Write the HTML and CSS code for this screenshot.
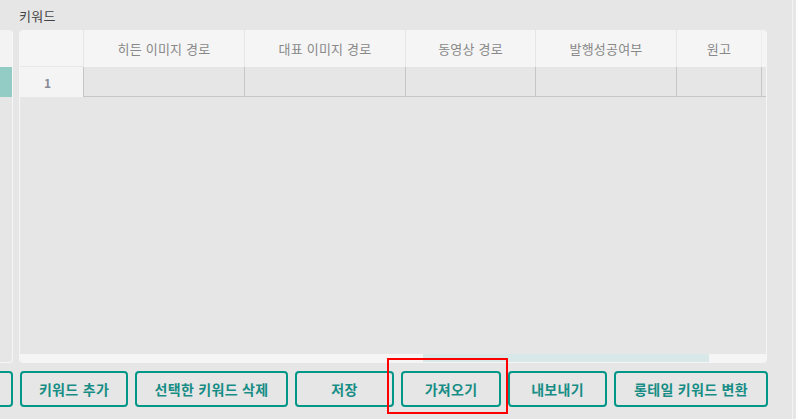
FILE: index.html
```html
<!DOCTYPE html>
<html lang="ko">
<head>
<meta charset="utf-8">
<link rel="stylesheet" href="styles.css">
</head>
<body>
<div class="page">
  <div class="content">
    <div class="title">키워드</div>
    <div class="main">
      <div class="side">
        <div class="side-head"></div>
        <div class="side-row"></div>
      </div>
      <div class="grid">
        <div class="grid-head">
          <div class="c c-num"></div>
          <div class="c c1">히든 이미지 경로</div>
          <div class="c c2">대표 이미지 경로</div>
          <div class="c c3">동영상 경로</div>
          <div class="c c4">발행성공여부</div>
          <div class="c c5">원고</div>
          <div class="c c6"></div>
        </div>
        <div class="grid-row">
          <div class="c c-num num">1</div>
          <div class="c c1"></div>
          <div class="c c2"></div>
          <div class="c c3"></div>
          <div class="c c4"></div>
          <div class="c c5"></div>
          <div class="c c6"></div>
        </div>
        <div class="grid-body"></div>
        <div class="hscroll"><div class="thumb"></div></div>
      </div>
    </div>
    <div class="buttons">
      <button class="btn b0" aria-label="이전"></button>
      <button class="btn b1">키워드 추가</button>
      <button class="btn b2">선택한 키워드 삭제</button>
      <button class="btn b3">저장</button>
      <button class="btn b4">가져오기</button>
      <button class="btn b5">내보내기</button>
      <button class="btn b6">롱테일 키워드 변환</button>
    </div>
  </div>
  <div class="vline"></div>
</div>
<div class="highlight"></div>
</body>
</html>
```
FILE: styles.css
```css
* { box-sizing: border-box; }
html, body {
  margin: 0;
  padding: 0;
  width: 796px;
  height: 419px;
  overflow: hidden;
  background: #e6e6e6;
  font-family: "Noto Sans CJK KR", "Noto Sans", sans-serif;
}
.page {
  display: flex;
  height: 419px;
}
.content {
  width: 792px;
  display: flex;
  flex-direction: column;
}
.vline {
  width: 1px;
  background: #f3f3f3;
  height: 419px;
}
.title {
  height: 30px;
  padding: 1px 0 0 19px;
  display: flex;
  align-items: center;
  font-size: 13px;
  color: #444;
  letter-spacing: 0.3px;
}
.main {
  display: flex;
  gap: 6px;
  height: 333px;
}
.side {
  width: 13px;
  display: flex;
  flex-direction: column;
  border-right: 1px solid #f6f6f6;
  border-bottom: 1px solid #f6f6f6;
  border-radius: 0 4px 4px 0;
  overflow: hidden;
}
.side-head {
  height: 37px;
  background: #f3f3f3;
}
.side-row {
  height: 30px;
  background: #93cbc5;
}
.grid {
  width: 748px;
  display: flex;
  flex-direction: column;
  border: 1px solid #f5f5f5;
  border-top: none;
  border-radius: 4px;
  overflow: hidden;
}
.grid-head, .grid-row {
  display: flex;
}
.grid-head {
  height: 37px;
  background: #f5f5f5;
  color: #888;
  font-size: 13px;
  letter-spacing: 0.2px;
}
.grid-head .c {
  display: flex;
  align-items: center;
  justify-content: center;
  border-left: 1px solid #e6e6e6;
  padding-bottom: 1px;
}
.grid-head .c-num { border-left: none; border-bottom: 1px solid #e8e8e8; }
.grid-row {
  height: 30px;
}
.grid-row .c {
  border-left: 1px solid #c6c6c6;
  border-bottom: 1px solid #c6c6c6;
}
.grid-row .c-num {
  border-left: none;
  border-bottom: none;
  background: #f4f4f4;
}
.num {
  display: flex;
  align-items: center;
  justify-content: center;
  padding-right: 8px;
  font-size: 12px;
  font-weight: 700;
  color: #8a8a96;
}
.c-num { width: 63px; }
.c1 { width: 161px; }
.c2 { width: 161px; }
.c3 { width: 130px; }
.c4 { width: 141px; }
.c5 { width: 85px; }
.c6 { width: 5px; }
.grid-head .c6 { border-left-color: #ececec; }
.grid-body {
  flex: 1;
}
.hscroll {
  height: 8px;
  background: #f5f5f5;
  display: flex;
}
.thumb {
  margin-left: 403px;
  width: 286px;
  background: #d8e8e8;
}
.buttons {
  display: flex;
  gap: 7px;
  margin-top: 8px;
}
.btn {
  height: 36px;
  border: 2px solid #009688;
  border-radius: 4px;
  background: transparent;
  color: #178d85;
  font-family: "Noto Sans CJK KR", "Noto Sans", sans-serif;
  font-size: 14px;
  font-weight: 700;
  letter-spacing: 0.3px;
  padding: 0;
  flex: none;
}
.b0 { width: 100px; margin-left: -87px; }
.b1 { width: 108px; }
.b2 { width: 153px; }
.b3 { width: 99px; }
.b4 { width: 100px; }
.b5 { width: 99px; }
.b6 { width: 154px; }
.highlight {
  position: absolute;
  left: 387px;
  top: 358px;
  width: 121px;
  height: 56px;
  border: 2px solid #ff0000;
}
```
